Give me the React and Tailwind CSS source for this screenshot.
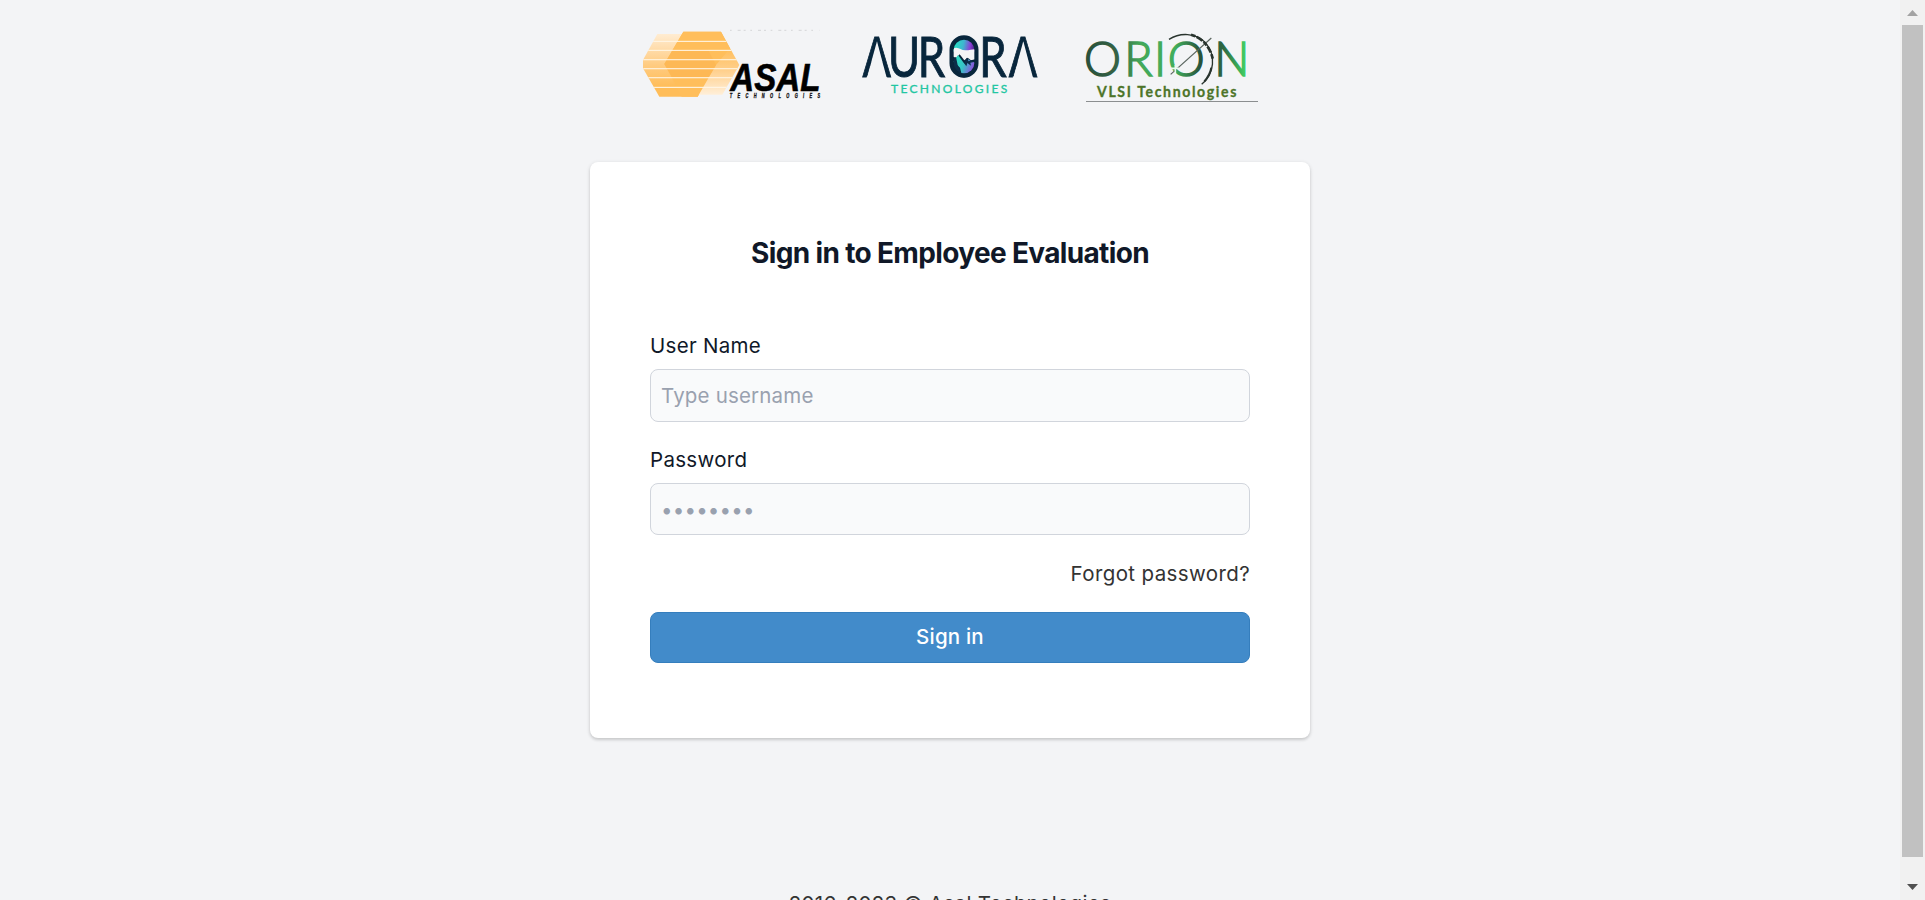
import React from "react";

function AsalLogo() {
  const stripes = [79, 106, 134, 161, 188, 217];
  return (
    <svg className="h-[100px] w-[185px] shrink-0" viewBox="30 0 555 300" aria-label="Asal Technologies">
      <defs>
        <linearGradient id="asalLeft" x1="0" y1="57" x2="0" y2="245" gradientUnits="userSpaceOnUse">
          <stop offset="0" stopColor="#ffecd2" />
          <stop offset="0.5" stopColor="#ffcb80" />
          <stop offset="0.85" stopColor="#ffbd59" />
        </linearGradient>
        <linearGradient id="asalRight" x1="0" y1="50" x2="0" y2="240" gradientUnits="userSpaceOnUse">
          <stop offset="0.25" stopColor="#ffbd59" />
          <stop offset="0.6" stopColor="#ffcf8a" />
          <stop offset="1" stopColor="#ffefd9" />
        </linearGradient>
        <clipPath id="asalShape">
          <path d="M82 57H213L258 150L203 245H88L39 160V135ZM160 50H273L328 150L277 239H155L103 147Z" />
        </clipPath>
      </defs>
      <path d="M82 57H213L258 150L203 245H88L39 160V135Z" fill="url(#asalLeft)" />
      <path d="M160 50H273L328 150L277 239H155L103 147Z" fill="url(#asalRight)" />
      <path d="M103 147L160 50H273L300 100L258 150L203 245H155Z" fill="#ffbe5b" />
      <path d="M129 104H234L258 150L235 188H127L103 147Z" fill="#fdb855" />
      <g clipPath="url(#asalShape)">
        {stripes.map((y) => (
          <rect key={y} x="39" y={y - 1.5} width="290" height="3.2" fill="#fff6e6" />
        ))}
      </g>
      <path d="M300 46H568" stroke="#cfd0d2" strokeWidth="2.5" strokeDasharray="5 18 9 9 6 14" />
      <text x="301" y="228" textLength="270" lengthAdjust="spacingAndGlyphs" fontFamily="Liberation Sans" fontWeight="700" fontStyle="italic" fontSize="117" fill="#000" stroke="#000" strokeWidth="2">
        ASAL
      </text>
      <text transform="translate(299 248) scale(.62 1)" textLength="438" fontFamily="Liberation Sans" fontWeight="700" fontStyle="italic" fontSize="19" fill="#111" stroke="#111" strokeWidth="1">
        TECHNOLOGIES
      </text>
    </svg>
  );
}

function AuroraLogo() {
  return (
    <svg className="h-[100px] w-[180px] shrink-0" viewBox="45 0 540 300" aria-label="Aurora Technologies">
      <defs>
        <linearGradient id="auroraSky" x1="330" y1="80" x2="388" y2="90" gradientUnits="userSpaceOnUse">
          <stop offset="0" stopColor="#25e0c4" />
          <stop offset="0.45" stopColor="#3fb5cf" />
          <stop offset="0.8" stopColor="#8a3fd6" />
          <stop offset="1" stopColor="#5a2a9a" />
        </linearGradient>
        <linearGradient id="auroraPeak" x1="335" y1="130" x2="388" y2="150" gradientUnits="userSpaceOnUse">
          <stop offset="0" stopColor="#2ad9c2" />
          <stop offset="0.45" stopColor="#37c5c6" />
          <stop offset="1" stopColor="#8d50dd" />
        </linearGradient>
        <clipPath id="auroraLens">
          <rect x="326" y="74" width="62" height="101" rx="31" />
        </clipPath>
      </defs>
      <g fill="#08263c" stroke="#08263c" strokeWidth="3" fontFamily="Lato" fontSize="168">
        <text transform="translate(52.5 186) scale(.75 1)">A</text>
        <text transform="translate(129 186) scale(.78 1)">U</text>
        <text transform="translate(218.6 186) scale(.78 1)">R</text>
        <text transform="translate(318 186) scale(.58 1)">O</text>
        <text transform="translate(402.6 186) scale(.78 1)">R</text>
        <text transform="translate(491.5 186) scale(.75 1)">A</text>
      </g>
      <path d="M96 79L125 189H66ZM535 79L564 189H505Z" fill="#f3f4f6" />
      <rect x="320" y="67" width="74" height="115" rx="37" fill="#08263c" stroke="#08263c" strokeWidth="13" />
      <g clipPath="url(#auroraLens)">
        <rect x="320" y="70" width="72" height="40" fill="url(#auroraSky)" />
        <path d="M320 103C340 90 345 107 362 106C375 106 382 102 392 103V132L378 136L368 128L358 136L344 118L334 128L320 124Z" fill="#f3f4f6" />
        <path d="M325 140L339 120L358 146L370 133L390 143V178H350L345 158L335 150Z" fill="url(#auroraPeak)" />
        <path d="M357 144L365 128L371 139L378 135L390 140L376 143L378 152L367 144L364 154Z" fill="#0b2d49" />
        <path d="M333 126L326 132V172L346 176L344 160L338 150Z" fill="#0b2d49" />
      </g>
      <text x="138" y="233" textLength="349" fontFamily="Lato" fontWeight="400" fontSize="36" fill="#22c6a2" stroke="#22c6a2" strokeWidth="1">
        TECHNOLOGIES
      </text>
    </svg>
  );
}

function OrionLogo() {
  return (
    <svg className="h-[100px] w-[175px] shrink-0" viewBox="45 0 525 300" aria-label="Orion VLSI Technologies">
      <defs>
        <linearGradient id="orionWord" x1="48" y1="0" x2="526" y2="0" gradientUnits="userSpaceOnUse">
          <stop offset="0" stopColor="#28503a" />
          <stop offset="0.2" stopColor="#356346" />
          <stop offset="0.34" stopColor="#43a85a" />
          <stop offset="0.56" stopColor="#41ae5b" />
          <stop offset="0.72" stopColor="#27513b" />
          <stop offset="0.86" stopColor="#2d6642" />
          <stop offset="1" stopColor="#41cf63" />
        </linearGradient>
      </defs>
      <text x="42 163 252 293 433" y="182" fontFamily="Lato" fontWeight="300" fontSize="140" fill="url(#orionWord)" stroke="url(#orionWord)" strokeWidth="4.5">
        ORION
      </text>
      <path d="M302 178L424 69" stroke="#5a655f" strokeWidth="3.5" />
      <path d="M303 160L327 160M316 150V178" stroke="#eafaf0" strokeWidth="5" />
      <path d="M297 73C330 52 376 53 405 82C440 119 433 177 395 208" fill="none" stroke="#29342e" strokeWidth="4" />
      <path d="M363 59C395 68 421 94 429 135" fill="none" stroke="#29342e" strokeWidth="8" strokeDasharray="14 4 21 5" />
      <path d="M424 158C421 174 413 188 403 199" fill="none" stroke="#29342e" strokeWidth="6" />
      <text transform="translate(81 246) scale(.88 1)" textLength="475" fontFamily="Lato" fontWeight="700" fontSize="48" fill="#4d7429" stroke="#4d7429" strokeWidth="1">
        VLSI Technologies
      </text>
      <path d="M48 259.5H564" stroke="#8b8e90" strokeWidth="3" />
    </svg>
  );
}

function Field({ label, className, ...props }) {
  return (
    <label className={"block " + className}>
      <span className="block h-[30px] text-[20.5px] leading-[31px] tracking-[0.3px] text-gray-900">{label}</span>
      <input
        className="mt-[9px] block h-[52.5px] w-full rounded-lg border border-gray-300 bg-gray-50 px-2.5 text-[20.5px] tracking-[0.18px] text-gray-900 placeholder:text-gray-400"
        {...props}
      />
    </label>
  );
}

function Scrollbar() {
  return (
    <div className="flex h-full w-[25px] shrink-0 flex-col items-center bg-[#f1f1f1]">
      <div className="flex h-[25px] items-center">
        <svg className="mt-[1px] h-[6px] w-[11px]" viewBox="0 0 11 6"><path d="M0 6L5.5 0L11 6Z" fill="#a3a3a3" /></svg>
      </div>
      <div className="h-[832px] w-[21px] bg-[#c1c1c1]" />
      <div className="flex flex-1 items-start pt-[27px]">
        <svg className="h-[6px] w-[11px]" viewBox="0 0 11 6"><path d="M0 0H11L5.5 6Z" fill="#505050" /></svg>
      </div>
    </div>
  );
}

export default function App() {
  return (
    <div className="flex h-[900px] w-full overflow-hidden bg-gray-100 font-['Inter',sans-serif] [font-optical-sizing:none]">
      <main className="flex flex-1 flex-col items-center pt-[15px]">
        <header className="flex">
          <AsalLogo />
          <div className="mr-[45px] ml-[35px] flex"><AuroraLogo /></div>
          <OrionLogo />
        </header>
        <section className="mt-[47px] h-[576px] w-[720px] shrink-0 rounded-lg bg-white px-[60px] pt-[72px] shadow-[0_1px_4px_rgba(0,0,0,0.12),0_2px_3px_rgba(0,0,0,0.1)]">
          <h1 className="text-center text-[28px] leading-[38px] font-bold tracking-[-0.65px] text-gray-900">
            Sign in to Employee Evaluation
          </h1>
          <form className="mt-[58px]" onSubmit={(e) => e.preventDefault()}>
            <Field label="User Name" type="text" placeholder="Type username" className="h-[113.75px]" />
            <Field label="Password" type="password" placeholder="••••••••" className="h-[114.25px]" />
            <div className="flex h-[42px] items-start justify-end">
              <a href="#" className="text-[20.5px] leading-[32px] tracking-[0.38px] text-[#333]">Forgot password?</a>
            </div>
            <button className="mt-[12px] block h-[51px] w-full rounded-lg border border-[#357ebd] bg-[#428bca] pb-[1px] text-center text-[20.5px] font-medium tracking-[0.2px] text-white">
              Sign in
            </button>
          </form>
        </section>
        <footer className="mt-[150px] shrink-0 text-[20.5px] leading-[32px] tracking-[0.34px] whitespace-nowrap text-[#333]">2016-2023 © Asal Technologies</footer>
      </main>
      <Scrollbar />
    </div>
  );
}
